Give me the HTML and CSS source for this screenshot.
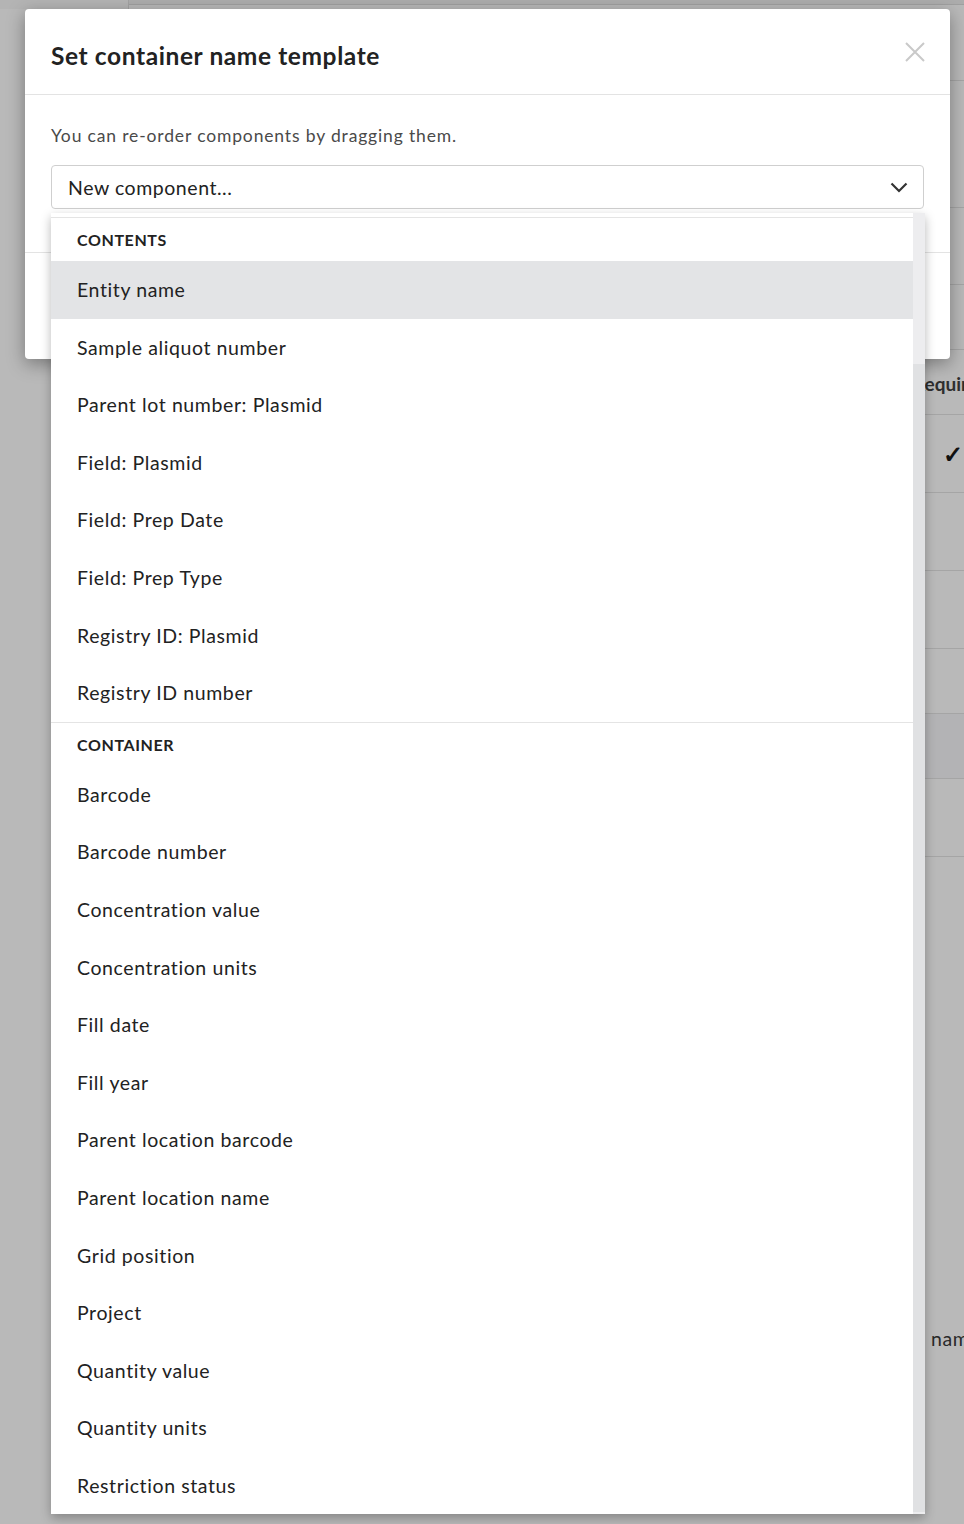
FILE: index.html
```html
<!DOCTYPE html>
<html lang="en">
<head>
  <meta charset="UTF-8">
  <title>Set container name template</title>
  <link rel="stylesheet" href="styles.css">
</head>
<body>
  <!-- page behind the dimmed overlay -->
  <div class="page">
    <div class="page-top">
      <div class="page-logo"></div>
      <div class="page-nav"></div>
    </div>
    <div class="rows">
      <div class="row h72"></div>
      <div class="row h127"></div>
      <div class="row h77"></div>
      <div class="row h65"></div>
      <div class="row h65 thead"><span></span><span class="col-req">Required</span></div>
      <div class="row h78"><span></span><span class="col-check">&#10003;</span></div>
      <div class="row h78"></div>
      <div class="row h78"></div>
      <div class="row h65"></div>
      <div class="row h65 selected"></div>
      <div class="row h78"></div>
      <div class="section"><span class="col-name">nam</span></div>
    </div>
  </div>

  <div class="modal">
    <div class="modal-header">
      <h3 class="modal-title">Set container name template</h3>
      <svg class="close" width="22" height="22" viewBox="0 0 22 22">
        <path d="M2 2 L20 20 M20 2 L2 20" stroke="#c9c9c9" stroke-width="2" fill="none"/>
      </svg>
    </div>
    <div class="modal-body">
      <p class="hint">You can re-order components by dragging them.</p>
      <div class="select">
        <span>New component...</span>
        <svg width="18" height="11" viewBox="0 0 18 11">
          <polyline points="1.5,1.5 9,9 16.5,1.5" stroke="#333" stroke-width="2.2" fill="none"/>
        </svg>
      </div>
    </div>
    <div class="modal-footer">
      <button class="btn">Cancel</button>
      <button class="btn btn-primary">Save</button>
    </div>
  </div>

  <div class="menu">
    <div class="menu-list">
      <div class="group">
        <div class="group-title">Contents</div>
        <div class="item active">Entity name</div>
        <div class="item">Sample aliquot number</div>
        <div class="item">Parent lot number: Plasmid</div>
        <div class="item">Field: Plasmid</div>
        <div class="item">Field: Prep Date</div>
        <div class="item">Field: Prep Type</div>
        <div class="item">Registry ID: Plasmid</div>
        <div class="item">Registry ID number</div>
      </div>
      <div class="group">
        <div class="group-title">Container</div>
        <div class="item">Barcode</div>
        <div class="item">Barcode number</div>
        <div class="item">Concentration value</div>
        <div class="item">Concentration units</div>
        <div class="item">Fill date</div>
        <div class="item">Fill year</div>
        <div class="item">Parent location barcode</div>
        <div class="item">Parent location name</div>
        <div class="item">Grid position</div>
        <div class="item">Project</div>
        <div class="item">Quantity value</div>
        <div class="item">Quantity units</div>
        <div class="item">Restriction status</div>
      </div>
    </div>
    <div class="scrollbar"><div class="thumb"></div></div>
  </div>
</body>
</html>
```

FILE: styles.css
```css
html, body {
  margin: 0;
  height: 1524px;
  overflow: hidden;
}
body {
  font-family: Lato, "Open Sans", sans-serif;
  background: #b9b9b9;
  color: #222;
  position: relative;
}

/* background page */
.page {
  height: 1524px;
}
.page-top {
  display: flex;
  height: 9px;
}
.page-logo {
  width: 128px;
  background: #b4b4b4;
  border-right: 1px solid #a2a2a2;
}
.page-nav {
  flex: 1;
  background: #adadad;
  border-bottom: 1px solid #a0a0a0;
  height: 4px;
}
.rows {
  margin-left: 129px;
}
.row {
  display: grid;
  grid-template-columns: 1fr 51px;
  align-items: center;
  border-bottom: 1px solid #a5a5a5;
  box-sizing: border-box;
}
.h65 { height: 65px; }
.h72 { height: 72px; }
.h77 { height: 77px; }
.h78 { height: 78px; }
.h127 { height: 127px; }
.selected {
  background: #b3b3b5;
}
.col-req {
  font-size: 19px;
  font-weight: 700;
  color: #2e2e2e;
  white-space: nowrap;
  padding-top: 2px;
}
.col-check {
  font-size: 24px;
  font-weight: 700;
  color: #111;
  padding-left: 30px;
}
.section {
  display: flex;
  justify-content: flex-end;
  padding-top: 470px;
}
.col-name {
  font-size: 19.5px;
  letter-spacing: 0.6px;
  color: #2a2a2a;
  width: 33px;
}

/* modal */
.modal {
  position: absolute;
  top: 9px;
  left: 25px;
  width: 925px;
  height: 350px;
  background: #fff;
  border-radius: 4px;
  box-shadow: 0 5px 18px rgba(0,0,0,0.35);
}
.modal-header {
  height: 86px;
  box-sizing: border-box;
  padding: 33px 26px 0;
  border-bottom: 1px solid #e3e3e3;
  display: flex;
  justify-content: space-between;
  align-items: flex-start;
}
.modal-title {
  margin: 0;
  font-size: 24.5px;
  letter-spacing: 0.6px;
  line-height: 28px;
  font-weight: 700;
  color: #222;
}
.close {
  margin-top: -1px;
  margin-right: -2px;
}
.modal-body {
  padding: 29px 26px 43px;
}
.hint {
  margin: 0 0 17px;
  font-size: 17.5px;
  letter-spacing: 0.85px;
  line-height: 24px;
  color: #4a4a4a;
}
.select {
  height: 44px;
  box-sizing: border-box;
  border: 1px solid #cfcfcf;
  border-radius: 4px;
  padding: 0 15px 0 16px;
  display: flex;
  align-items: center;
  justify-content: space-between;
  font-size: 19.5px;
  letter-spacing: 0.55px;
  color: #222;
}
.modal-footer {
  border-top: 1px solid #e3e3e3;
  padding: 30px 26px;
  display: flex;
  justify-content: flex-end;
  gap: 10px;
}
.btn {
  font: inherit;
  font-size: 17px;
  padding: 10px 20px;
  border: 1px solid #ccc;
  background: #fff;
  border-radius: 4px;
}
.btn-primary {
  background: #2a6de0;
  color: #fff;
  border-color: #2a6de0;
}

/* dropdown menu */
.menu {
  position: absolute;
  top: 213px;
  left: 51px;
  width: 874px;
  height: 1301px;
  background: #fff;
  display: flex;
  box-shadow: 0 4px 10px rgba(0,0,0,0.28);
}
.menu-list {
  flex: 1;
  overflow: hidden;
  padding-top: 4px;
}
.group {
  border-top: 1px solid #e4e4e4;
}
.group-title {
  height: 43px;
  line-height: 43px;
  padding: 0 26px;
  font-size: 16px;
  letter-spacing: 0.6px;
  font-weight: 700;
  text-transform: uppercase;
  color: #222;
}
.item {
  padding: 18px 26px;
  font-size: 19.5px;
  letter-spacing: 0.6px;
  line-height: 21.6px;
  color: #222;
}
.item.active {
  background: #e3e4e6;
}
.scrollbar {
  width: 12px;
  background: #ededef;
  display: flex;
  flex-direction: column;
  justify-content: flex-end;
}
.thumb {
  height: 1148px;
  background: #e0e1e3;
  margin-bottom: 2px;
}
```
